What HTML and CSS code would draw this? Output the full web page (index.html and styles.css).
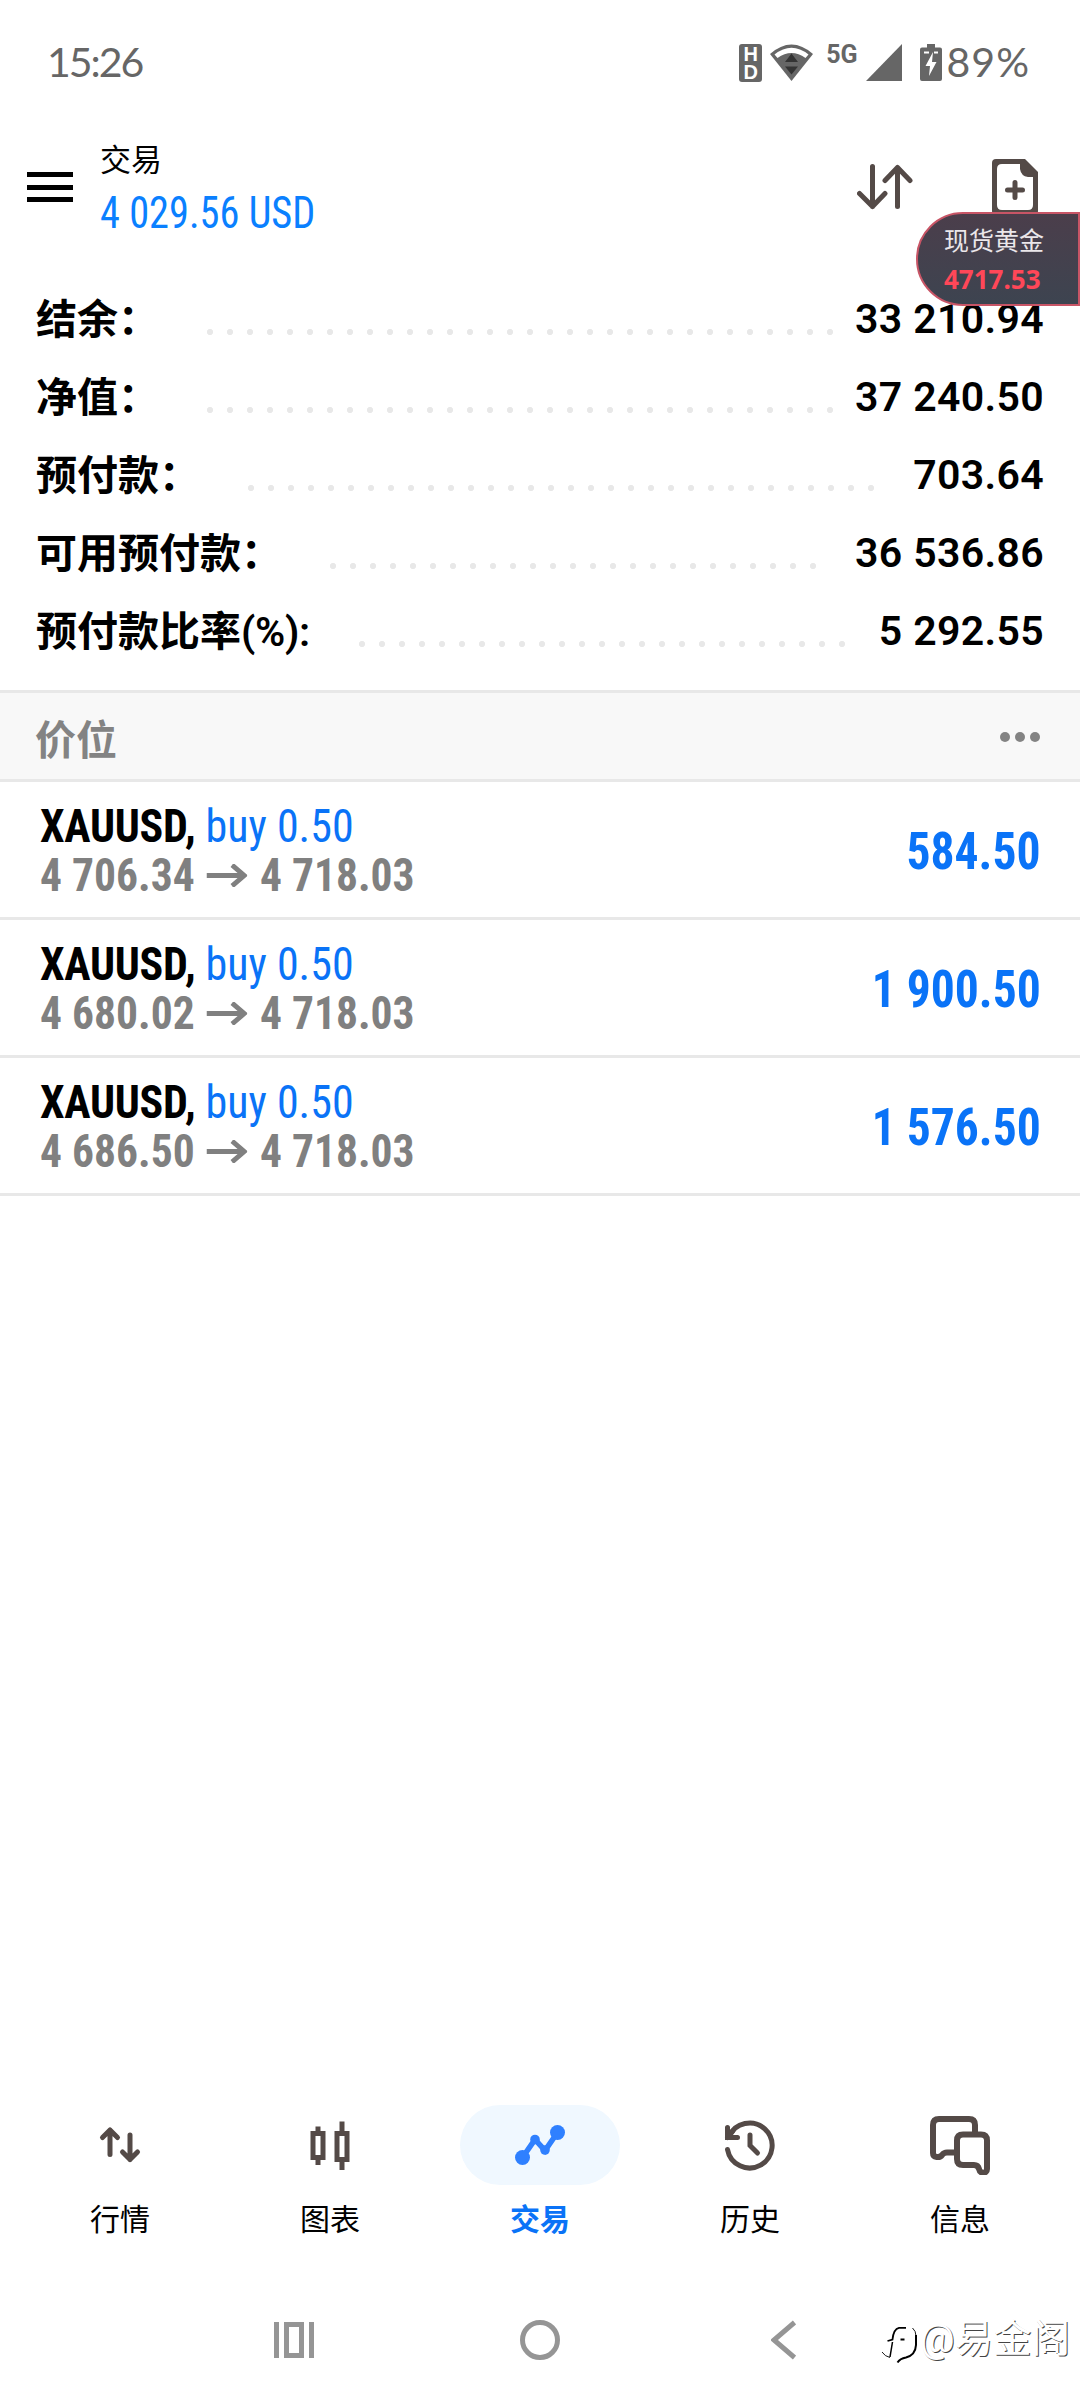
FILE: index.html
```html
<!DOCTYPE html>
<html lang="zh-CN">
<head>
  <meta charset="UTF-8" />
  <title>交易</title>
  <link rel="stylesheet" href="styles.css">
</head>
<body>
  <div class="status-bar">
    <span class="clock">15:26</span>
    <div class="status-icons">
      <div class="hd">H<br>D</div>
      <svg class="wifi" width="43" height="37" viewBox="0 0 43 37">
        <path d="M0 10 Q21.500 -9 43 10 L21.500 37 Z" fill="#666"/>
        <path d="M4.500 10.500 Q21.500 -3 38.500 10.500 L35.500 14 Q21.500 4 7.500 14 Z" fill="#fff"/>
        <path d="M15 18 L21.500 9.500 L28 18 Z M15 22.500 L28 22.500 L21.500 30.500 Z" fill="#333"/>
      </svg>
      <span class="network">5G</span>
      <svg class="signal" width="36" height="37" viewBox="0 0 36 37">
        <path d="M36 0 V37 H0 Z" fill="#666"/>
      </svg>
      <svg class="battery" width="22" height="37" viewBox="0 0 22 37">
        <path d="M7 0 H15 V3.500 H20 Q22 3.500 22 5.500 V35 Q22 37 20 37 H2 Q0 37 0 35 V5.500 Q0 3.500 2 3.500 H7 Z" fill="#666"/>
        <path d="M4 8.500 H9 M14 8.500 H18" stroke="#fff" stroke-width="2"/>
        <path d="M13 8 L5.500 22 H10 L9 32 L16.500 18 H12 Z" fill="#fff"/>
      </svg>
      <span class="percent">89%</span>
    </div>
  </div>

  <div class="header">
    <div class="menu"><i></i><i></i><i></i></div>
    <div class="titles">
      <div class="title">交易</div>
      <div class="profit">4 029.56 USD</div>
    </div>
    <svg class="sort" width="56" height="46" viewBox="0 0 56 46" fill="none" stroke="#544a47" stroke-width="5" stroke-linecap="round" stroke-linejoin="round">
      <path d="M15.500 2.500 V42.500 M2.500 29.500 L15.500 42.500 L28 29.500"/>
      <path d="M40.500 42.500 V3.500 M28 16.500 L40.500 3.500 L53 16.500"/>
    </svg>
    <svg class="new-order" width="46" height="56" viewBox="0 0 46 56">
      <path d="M4 0 H33 L46 13 V52 Q46 56 42 56 H4 Q0 56 0 52 V4 Q0 0 4 0 Z" fill="#544a47"/>
      <path d="M10 5 H28 V10 Q29 17 36 18 H41 V46 Q41 51 36 51 H10 Q5 51 5 46 V10 Q5 5 10 5 Z" fill="#fff"/>
      <path d="M15.500 31 H30.500 M23 23.500 V38.500" stroke="#544a47" stroke-width="5" stroke-linecap="round"/>
    </svg>
    <div class="price-float">
      <span class="float-name">现货黄金</span>
      <span class="float-price">4717.53</span>
    </div>
  </div>

  <div class="summary">
    <div class="line"><span class="label">结余：</span><span class="dots d1"></span><span class="value">33 210.94</span></div>
    <div class="line"><span class="label">净值：</span><span class="dots d1"></span><span class="value">37 240.50</span></div>
    <div class="line"><span class="label">预付款：</span><span class="dots d2"></span><span class="value">703.64</span></div>
    <div class="line"><span class="label">可用预付款：</span><span class="dots d3"></span><span class="value">36 536.86</span></div>
    <div class="line"><span class="label">预付款比率<span class="latin">(%):</span></span><span class="dots d4"></span><span class="value">5 292.55</span></div>
  </div>

  <div class="section">
    <span>价位</span>
    <div class="more"><i></i><i></i><i></i></div>
  </div>

  <div class="position">
    <div class="info">
      <div class="symbol"><b>XAUUSD,</b> <span class="side">buy 0.50</span></div>
      <div class="prices">
        <span>4 706.34</span>
        <svg width="43" height="23" viewBox="0 0 43 23"><path d="M0 11.500 H39 M27 1 L40 11.500 L27 22" fill="none" stroke="#808080" stroke-width="5"/></svg>
        <span>4 718.03</span>
      </div>
    </div>
    <div class="amount">584.50</div>
  </div>
  <div class="position">
    <div class="info">
      <div class="symbol"><b>XAUUSD,</b> <span class="side">buy 0.50</span></div>
      <div class="prices">
        <span>4 680.02</span>
        <svg width="43" height="23" viewBox="0 0 43 23"><path d="M0 11.500 H39 M27 1 L40 11.500 L27 22" fill="none" stroke="#808080" stroke-width="5"/></svg>
        <span>4 718.03</span>
      </div>
    </div>
    <div class="amount">1 900.50</div>
  </div>
  <div class="position">
    <div class="info">
      <div class="symbol"><b>XAUUSD,</b> <span class="side">buy 0.50</span></div>
      <div class="prices">
        <span>4 686.50</span>
        <svg width="43" height="23" viewBox="0 0 43 23"><path d="M0 11.500 H39 M27 1 L40 11.500 L27 22" fill="none" stroke="#808080" stroke-width="5"/></svg>
        <span>4 718.03</span>
      </div>
    </div>
    <div class="amount">1 576.50</div>
  </div>

  <div class="tabs">
    <div class="tab">
      <div class="icon">
        <svg width="60" height="60" viewBox="0 0 60 60" fill="none" stroke="#544a47" stroke-width="5" stroke-linecap="round" stroke-linejoin="round">
          <path d="M20 39.500 V15 M12.500 22.500 L20 15 L27.500 22.500"/>
          <path d="M40 20 V44.500 M32.500 37 L40 44.500 L47.500 37"/>
        </svg>
      </div>
      <span>行情</span>
    </div>
    <div class="tab">
      <div class="icon">
        <svg width="60" height="60" viewBox="0 0 60 60" fill="none" stroke="#544a47" stroke-width="5">
          <path d="M18 11.500 V16 M18 45 V50 M42 6.500 V16 M42 47 V55"/>
          <path d="M13 18.500 H23 V42.500 H13 Z M37 18.500 H47 V44.500 H37 Z"/>
        </svg>
      </div>
      <span>图表</span>
    </div>
    <div class="tab active">
      <div class="icon">
        <svg width="60" height="60" viewBox="0 0 60 60" fill="#2f80ff">
          <path d="M12.500 42.500 L25 24.500 L35 35.500 L47.500 17.500" fill="none" stroke="#2f80ff" stroke-width="5.500"/>
          <circle cx="12.500" cy="42.500" r="7.500"/>
          <circle cx="25" cy="24.500" r="4.800"/>
          <circle cx="35" cy="35" r="4.800"/>
          <circle cx="47.500" cy="17.500" r="7.500"/>
        </svg>
      </div>
      <span>交易</span>
    </div>
    <div class="tab">
      <div class="icon">
        <svg width="60" height="60" viewBox="0 0 60 60" fill="none" stroke="#544a47" stroke-width="5" stroke-linecap="round">
          <path d="M7.500 34.500 A22.500 22.500 0 1 0 9 21.500"/>
          <path d="M7.500 12.500 V22.500 H17.500 M7.500 22.500 L13 16 M30 20 V30.500 L37.500 38"/>
        </svg>
      </div>
      <span>历史</span>
    </div>
    <div class="tab">
      <div class="icon">
        <svg width="60" height="60" viewBox="0 0 60 60" fill="none" stroke="#544a47" stroke-width="6" stroke-linejoin="round">
          <path d="M45 17 V10 Q45 4 39 4 H9 Q3 4 3 10 V38 C3 43 10 43 12 40 Q14 37.500 17 37.500 H27"/>
          <path d="M33 19.500 H51 Q57 19.500 57 25.500 V54 C57 59 50 59 49 54 Q48 50 44 50 H33 Q27 50 27 44 V25.500 Q27 19.500 33 19.500 Z"/>
        </svg>
      </div>
      <span>信息</span>
    </div>
  </div>

  <div class="system-nav">
    <svg class="recents" width="40" height="36" viewBox="0 0 40 36" fill="none" stroke="#959595" stroke-width="5">
      <path d="M2.500 0 V36 M37.500 0 V36 M12.500 2.500 H27.500 V33.500 H12.500 Z"/>
    </svg>
    <svg class="home" width="40" height="40" viewBox="0 0 40 40">
      <circle cx="20" cy="20" r="17.500" fill="none" stroke="#959595" stroke-width="5"/>
    </svg>
    <svg class="back" width="25" height="40" viewBox="0 0 25 40">
      <path d="M23.500 2.500 L3 20 L23.500 37.500" fill="none" stroke="#959595" stroke-width="5"/>
    </svg>
    <div class="watermark">
      <svg width="40" height="46" viewBox="0 0 40 46" fill="none" stroke="#000">
        <path d="M7.500 21 L12.500 19.500 Q13.500 9 19 7.800 H26 M20.500 19.500 H24.500" stroke-width="1.800"/>
        <path d="M12.500 22 L10 37" stroke-width="1.500"/>
        <path d="M10 37.500 Q5 36.500 2 32 M32.500 8 Q36 11 36 16" stroke-width="0.900"/>
        <path d="M36 15 V25 Q35.500 35 26 37.500 Q20 38.500 17.500 42.500" stroke-width="2"/>
      </svg>
      <span>@易金阁</span>
    </div>
  </div>
</body>
</html>
```
FILE: styles.css
```css
* {
  box-sizing: border-box;
}

body {
  margin: 0;
  width: 1080px;
  height: 2400px;
  display: flex;
  flex-direction: column;
  background-color: #fff;
  color: #000;
  font-family: Roboto, "Noto Sans CJK SC", sans-serif;
}

svg {
  display: block;
  flex-shrink: 0;
}

/* status bar */
.status-bar {
  display: flex;
  justify-content: space-between;
  align-items: center;
  height: 125px;
  padding: 0 50px 0 47px;
  color: #666;
  font-family: Lato, sans-serif;
  font-size: 41px;
  line-height: 50px;
}

.clock {
  margin-bottom: 2px;
  letter-spacing: -2px;
}

.status-icons {
  display: flex;
  align-items: center;
}

.hd {
  width: 23px;
  height: 38px;
  margin-right: 8px;
  padding-top: 1px;
  border-radius: 3px;
  background-color: #666;
  color: #fff;
  font: bold 20px/18px "Liberation Sans", sans-serif;
  text-align: center;
}

.network {
  margin: 0 8px 16px 13px;
  font: bold 25px/25px Roboto, sans-serif;
}

.battery {
  margin-left: 18px;
}

.percent {
  margin: 0 0 2px 5px;
  letter-spacing: 1px;
}

/* header */
.header {
  position: relative;
  display: flex;
  align-items: flex-start;
  height: 155px;
  padding: 0 42px 0 27px;
}

.menu {
  display: flex;
  flex-direction: column;
  gap: 7.500px;
  width: 46px;
  margin-top: 47px;
}

.menu i {
  height: 5px;
  background-color: #000;
}

.titles {
  flex: 1;
  margin: 13px 0 0 27px;
}

.title {
  font-size: 31px;
  line-height: 46px;
}

.profit,
.symbol,
.prices,
.amount {
  font-family: "Roboto Condensed", Roboto, sans-serif;
  font-stretch: 75%;
  white-space: nowrap;
  transform-origin: left;
}

.profit {
  color: #0a80ff;
  font-size: 44px;
  line-height: 58px;
  transform: scaleX(0.917);
}

.sort {
  margin-top: 39px;
}

.new-order {
  margin: 34px 0 0 79px;
}

.price-float {
  position: absolute;
  right: 0;
  top: 87px;
  display: flex;
  flex-direction: column;
  width: 164px;
  height: 94px;
  padding: 9px 0 0 26px;
  border: 2px solid #c85566;
  border-radius: 47px 0 0 47px;
  background: linear-gradient(#4b3e4b, #3d4450);
}

.float-name {
  color: #ebe7ea;
  font-size: 25px;
  line-height: 38px;
}

.float-price {
  color: #ff4758;
  font: bold 26px/37px "Noto Sans", sans-serif;
}

/* account summary */
.summary {
  height: 410px;
  padding: 0 36px;
}

.line {
  display: flex;
  align-items: center;
  height: 78px;
  font-size: 41px;
  font-weight: bold;
}

.label {
  padding-top: 2px;
  line-height: 60px;
}

.latin {
  font-weight: 600;
  letter-spacing: -0.300px;
}

.value {
  margin-left: auto;
  font-weight: 600;
  letter-spacing: 0.350px;
}

.dots {
  height: 6px;
  margin-top: 26px;
  background: radial-gradient(circle at 3px 3px, #e8e8e8 2.800px, transparent 3.300px) 0 0 / 20px 6px repeat-x;
}

.d1 { width: 626px; margin-left: 48px; }
.d2 { width: 626px; margin-left: 48px; }
.d3 { width: 486px; margin-left: 48px; }
.d4 { width: 486px; margin-left: 49px; }

.section {
  display: flex;
  justify-content: space-between;
  align-items: center;
  height: 92px;
  padding: 2px 40px 0 35px;
  border-top: 3px solid #e8e8e8;
  border-bottom: 3px solid #e8e8e8;
  background-color: #f8f8f8;
  color: #838383;
  font-size: 41px;
  font-weight: bold;
}

.more {
  display: flex;
  gap: 5px;
}

.more i {
  width: 10px;
  height: 10px;
  border-radius: 50%;
  background-color: #838383;
}

/* open positions */
.position {
  display: flex;
  justify-content: space-between;
  align-items: center;
  height: 138px;
  padding: 3px 39px 0 40px;
  border-bottom: 3px solid #e8e8e8;
}

.symbol {
  font-size: 46px;
  line-height: 49px;
  transform: scaleX(0.956);
}

.symbol b {
  letter-spacing: -0.300px;
}

.side {
  color: #0a73f7;
}

.prices {
  display: flex;
  align-items: center;
  gap: 13px;
  color: #808080;
  font-size: 46px;
  font-weight: bold;
  line-height: 49px;
  transform: scaleX(0.946);
}

.amount {
  color: #0a73f7;
  font-size: 52px;
  font-weight: bold;
  transform: scaleX(0.915);
  transform-origin: right;
}

/* bottom tabs */
.tabs {
  display: flex;
  height: 195px;
  margin-top: auto;
  padding: 0 15px;
}

.tab {
  display: flex;
  flex-direction: column;
  align-items: center;
  width: 210px;
  font-size: 30px;
  line-height: 70px;
}

.icon {
  display: flex;
  align-items: center;
  justify-content: center;
  width: 160px;
  height: 80px;
  border-radius: 40px;
}

.active {
  color: #0a73f7;
  font-weight: bold;
}

.active .icon {
  background-color: #f0f8ff;
}

.system-nav {
  display: flex;
  align-items: flex-start;
  height: 100px;
  padding: 20px 0 0 274px;
}

.recents {
  margin-top: 2px;
}

.home {
  margin-left: 206px;
}

.back {
  margin-left: 211px;
}

.watermark {
  display: flex;
  margin-left: 84px;
  color: #fff;
  font-size: 38.500px;
  line-height: 37px;
  white-space: nowrap;
  text-shadow: 1px 1px 0 #444;
}
```
